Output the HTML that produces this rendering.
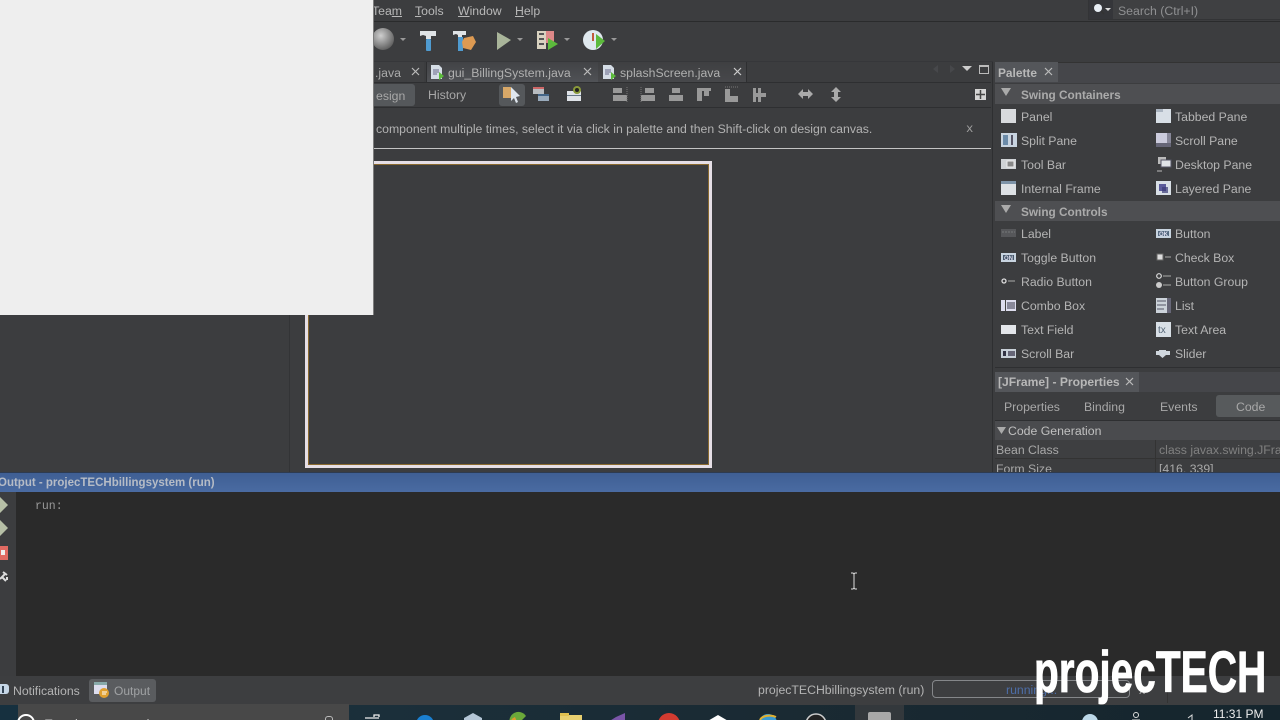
<!DOCTYPE html>
<html><head><meta charset="utf-8"><style>
html,body{margin:0;padding:0;width:1280px;height:720px;overflow:hidden;background:#3c3d3f}
#r{position:relative;width:1280px;height:720px;overflow:hidden;background:#3c3d3f;font:12.28px "Liberation Sans",sans-serif;color:#b4b4b4;filter:blur(.3px)}
.a{position:absolute}
.t{position:absolute;white-space:nowrap;line-height:14px}
.i{position:absolute;overflow:visible}
u{text-decoration:underline}
</style></head><body><div id="r">
<!-- lines -->
<div class="a" style="left:0;top:21px;width:1280px;height:1px;background:#2a2b2c"></div>
<div class="a" style="left:373px;top:61px;width:620px;height:1px;background:#36373a"></div>

<!-- menu -->
<div class="t" style="left:372px;top:4px;color:#b8b8b8">Tea<u>m</u></div>
<div class="t" style="left:415px;top:4px;color:#b8b8b8"><u>T</u>ools</div>
<div class="t" style="left:458px;top:4px;color:#b8b8b8"><u>W</u>indow</div>
<div class="t" style="left:515px;top:4px;color:#b8b8b8"><u>H</u>elp</div>

<!-- search -->
<div class="a" style="left:1088px;top:0;width:192px;height:19px;background:#3f4042;border:1px solid #333436;border-top:0;border-right:0"></div>
<div class="a" style="left:1089px;top:0;width:24px;height:19px;background:#35363a"></div>
<svg class="i" style="left:1092px;top:2px" width="20" height="14"><circle cx="6" cy="6" r="4" fill="#e8eef5"/><path d="M9 9l3 3" stroke="#333" stroke-width="1.5"/><path d="M13 6h6l-3 3z" fill="#ddd"/></svg>
<div class="t" style="left:1118px;top:4px;color:#8f9092">Search (Ctrl+I)</div>

<!-- toolbar icons -->
<svg class="i" style="left:372px;top:26px" width="250" height="28" viewBox="372 26 250 28">
<defs><radialGradient id="g" cx=".4" cy=".35" r=".7"><stop offset="0" stop-color="#cfcfcf"/><stop offset="1" stop-color="#5a5a5a"/></radialGradient></defs>
<circle cx="383" cy="39" r="11" fill="url(#g)"/>
<path d="M400 38h6l-3 3z" fill="#999"/>
<path d="M420 31h16v5h-5v3h-5v-3l-3-1-3 1z" fill="#dfe3e6"/><rect x="426" y="39" width="5" height="12" rx="1" fill="#4f9bd0"/>
<path d="M453 31h13v4h-4v2h-4v-2l-2-1-3 1z" fill="#dfe3e6"/><rect x="458" y="37" width="5" height="14" fill="#4f9bd0"/>
<path d="M464 38l9-2 3 6-5 8-8-2-1-6z" fill="#dd9a52"/>
<path d="M497 32l14 8-14 10z" fill="#a9b59a"/>
<path d="M517 38h6l-3 3z" fill="#999"/>
<rect x="537" y="31" width="9" height="18" fill="#d8d2c0"/><rect x="546" y="31" width="8" height="12" fill="#d88"/>
<path d="M539 34h5M539 39h5M539 44h5" stroke="#555" stroke-width="2"/>
<path d="M548 38l10 6-10 6z" fill="#5cba3c"/>
<path d="M564 38h6l-3 3z" fill="#999"/>
<circle cx="593" cy="40" r="10" fill="#dfe8ee"/><path d="M593 33v8" stroke="#c05a3a" stroke-width="2"/>
<path d="M596 34l9 7-9 8z" fill="#5cba3c"/>
<path d="M611 38h6l-3 3z" fill="#999"/>
</svg>

<!-- tab bar -->
<div class="a" style="left:373px;top:62px;width:51px;height:20px;background:#3f4042"></div>
<div class="t" style="left:375px;top:66px;color:#aaa">.java</div>
<svg class="i" style="left:411px;top:67px" width="10" height="10"><path d="M1 1l7 7M8 1l-7 7" stroke="#bbb" stroke-width="1.2"/></svg>
<div class="a" style="left:426px;top:62px;width:171px;height:20px;background:linear-gradient(#424346,#505256);border-left:1px solid #2e2f31;border-right:1px solid #2e2f31"></div>
<svg class="i" style="left:430px;top:65px" width="16" height="15"><path d="M1 0h8l3 3v11H1z" fill="#d5dde6"/><path d="M3 5h6M3 7h6M3 9h4" stroke="#668" /><path d="M9 7l5 4-5 4z" fill="#5cba3c"/></svg>
<div class="t" style="left:448px;top:66px;color:#b0b0b0">gui_BillingSystem.java</div>
<svg class="i" style="left:583px;top:67px" width="10" height="10"><path d="M1 1l7 7M8 1l-7 7" stroke="#bbb" stroke-width="1.2"/></svg>
<div class="a" style="left:598px;top:62px;width:148px;height:20px;background:linear-gradient(#3f4042,#47484b);border-right:1px solid #2e2f31"></div>
<svg class="i" style="left:602px;top:65px" width="16" height="15"><path d="M1 0h8l3 3v11H1z" fill="#d5dde6"/><path d="M3 5h6M3 7h6M3 9h4" stroke="#668" /><path d="M9 7l5 4-5 4z" fill="#5cba3c"/></svg>
<div class="t" style="left:620px;top:66px;color:#b0b0b0">splashScreen.java</div>
<svg class="i" style="left:733px;top:67px" width="10" height="10"><path d="M1 1l7 7M8 1l-7 7" stroke="#ccc" stroke-width="1.2"/></svg>
<div class="a" style="left:373px;top:82px;width:618px;height:1px;background:#2e2f31"></div>
<svg class="i" style="left:930px;top:62px" width="60" height="16"><path d="M8 3l-5 4 5 4zM20 3l5 4-5 4z" fill="#47484b"/><path d="M32 4h10l-5 5z" fill="#ccc"/><rect x="49.500" y="3.500" width="9" height="8" fill="none" stroke="#bbb"/><path d="M49 4h10" stroke="#bbb" stroke-width="2"/></svg>

<!-- design toolbar -->
<div class="a" style="left:373px;top:84px;width:42px;height:22px;background:#55585b;border-radius:0 3px 3px 0"></div>
<div class="t" style="left:376px;top:89px;color:#a8a8a8">esign</div>
<div class="t" style="left:428px;top:88px;color:#a8a8a8">History</div>
<div class="a" style="left:499px;top:84px;width:26px;height:22px;background:#55585b;border-radius:3px"></div>
<svg class="i" style="left:503px;top:86px" width="22" height="18"><rect x="0" y="1" width="8" height="11" fill="#d8a868"/><path d="M8 1l9 9-4 1 2 5-2 1-2-5-3 3z" fill="#dfe6ee"/></svg>
<svg class="i" style="left:532px;top:86px" width="18" height="16"><rect x="1" y="1" width="11" height="7" fill="#b8bcc0"/><rect x="1" y="1" width="11" height="2" fill="#c66"/><rect x="6" y="8" width="11" height="7" fill="#9ab"/><rect x="6" y="8" width="11" height="2" fill="#468"/></svg>
<svg class="i" style="left:566px;top:86px" width="18" height="16"><rect x="1" y="5" width="14" height="10" fill="#dfe3e8"/><rect x="1" y="9" width="14" height="1" fill="#678"/><circle cx="11" cy="4" r="4" fill="#8a9a3a"/><circle cx="11" cy="4" r="2" fill="#222"/></svg>
<svg class="i" style="left:612px;top:86px" width="160" height="18" fill="#999">
<path d="M1 2h9v5H1zM1 9h14v6H1z"/><path d="M15 1v16M1 16" stroke="#777" stroke-dasharray="1 1" fill="none"/>
<path d="M33 2h9v5h-9zM29 9h14v6H29z"/><path d="M29 1v16" stroke="#777" stroke-dasharray="1 1" fill="none"/>
<path d="M60 2h8v5h-8zM57 9h14v6H57z"/>
<path d="M85 2h14v3H85zM85 5h5v10h-5zM92 5h5v5h-5z"/>
<path d="M113 3h5v13h-5zM118 10h8v6h-8z"/><path d="M113 1h13" stroke="#777" stroke-dasharray="1 1" fill="none"/>
<path d="M141 2h3v14h-3zM146 2h3v14h-3zM144 7h10v4h-10z"/>
</svg>
<svg class="i" style="left:797px;top:87px" width="48" height="15" fill="#aaa"><path d="M1 7l5-5v3h5V2l5 5-5 5V9H6v3z"/><path d="M39 0l5 5h-3v5h3l-5 5-5-5h3V5h-3z"/></svg>
<svg class="i" style="left:975px;top:89px" width="11" height="11"><rect width="11" height="11" fill="#d5d5d5"/><path d="M5.500 1v9M1 5.500h9" stroke="#444" stroke-width="1.500"/></svg>
<div class="a" style="left:373px;top:107px;width:618px;height:1px;background:#2e2f31"></div>

<!-- hint -->
<div class="t" style="left:376px;top:122px;color:#b2b2b2">component multiple times, select it via click in palette and then Shift-click on design canvas.</div>
<div class="t" style="left:966px;top:122px;color:#a0a0a0;font-family:'Liberation Mono',monospace">x</div>
<div class="a" style="left:373px;top:148px;width:618px;height:1px;background:#c4c4c4"></div>

<!-- design canvas -->
<div class="a" style="left:305px;top:161px;width:401px;height:301px;border:3px solid #e6dfe6;box-shadow:inset 0 0 0 1px #8a6a30"></div>
<div class="a" style="left:289px;top:0;width:1px;height:472px;background:#333436"></div>

<!-- splitter -->
<div class="a" style="left:992px;top:62px;width:1px;height:410px;background:#2e2f31"></div>

<!-- Palette -->
<div class="a" style="left:995px;top:62px;width:285px;height:20px;background:#45464a;border-top:1px solid #333"></div>
<div class="a" style="left:995px;top:62px;width:63px;height:20px;background:#54565a"></div>
<div class="t" style="left:998px;top:66px;color:#b8b8b8;font-weight:bold;font-size:11.9px">Palette</div>
<svg class="i" style="left:1044px;top:67px" width="10" height="10"><path d="M1 1l7 7M8 1l-7 7" stroke="#bbb" stroke-width="1.2"/></svg>
<div class="a" style="left:995px;top:84px;width:285px;height:20px;background:#4e4f52"></div>
<svg class="i" style="left:1001px;top:88px" width="11" height="9"><path d="M0 0h10l-5 8z" fill="#aaa"/></svg>
<div class="t" style="left:1021px;top:88px;color:#ababab;font-weight:bold;font-size:11.8px">Swing Containers</div>
<div class="a" style="left:995px;top:201px;width:285px;height:20px;background:#4e4f52"></div>
<svg class="i" style="left:1001px;top:205px" width="11" height="9"><path d="M0 0h10l-5 8z" fill="#aaa"/></svg>
<div class="t" style="left:1021px;top:205px;color:#ababab;font-weight:bold;font-size:11.8px">Swing Controls</div>

<div class="t" style="left:1021px;top:110px">Panel</div>
<div class="t" style="left:1021px;top:134px">Split Pane</div>
<div class="t" style="left:1021px;top:158px">Tool Bar</div>
<div class="t" style="left:1021px;top:182px">Internal Frame</div>
<div class="t" style="left:1175px;top:110px">Tabbed Pane</div>
<div class="t" style="left:1175px;top:134px">Scroll Pane</div>
<div class="t" style="left:1175px;top:158px">Desktop Pane</div>
<div class="t" style="left:1175px;top:182px">Layered Pane</div>
<div class="t" style="left:1021px;top:227px">Label</div>
<div class="t" style="left:1021px;top:251px">Toggle Button</div>
<div class="t" style="left:1021px;top:275px">Radio Button</div>
<div class="t" style="left:1021px;top:299px">Combo Box</div>
<div class="t" style="left:1021px;top:323px">Text Field</div>
<div class="t" style="left:1021px;top:347px">Scroll Bar</div>
<div class="t" style="left:1175px;top:227px">Button</div>
<div class="t" style="left:1175px;top:251px">Check Box</div>
<div class="t" style="left:1175px;top:275px">Button Group</div>
<div class="t" style="left:1175px;top:299px">List</div>
<div class="t" style="left:1175px;top:323px">Text Area</div>
<div class="t" style="left:1175px;top:347px">Slider</div>

<svg class="i" style="left:1000px;top:108px" width="280" height="256" viewBox="1000 108 280 256">
<rect x="1001" y="109" width="15" height="14" fill="#d8dadd"/>
<rect x="1156" y="109" width="15" height="14" fill="#d8dfe6"/><rect x="1156" y="109" width="7" height="3" fill="#aab4c0"/>
<rect x="1001" y="133" width="16" height="14" fill="#c8d4e0"/><rect x="1003" y="135" width="5" height="10" fill="#6a8aa8"/><rect x="1011" y="135" width="2" height="10" fill="#556"/>
<rect x="1156" y="133" width="15" height="14" fill="#ccd"/><rect x="1167" y="133" width="4" height="14" fill="#889"/><rect x="1156" y="143" width="15" height="4" fill="#667"/>
<rect x="1001" y="159" width="15" height="10" fill="#d0d3d6"/><rect x="1007" y="161" width="7" height="6" fill="#888" stroke="#eee"/>
<rect x="1158" y="157" width="8" height="7" fill="#bbb"/><rect x="1161" y="160" width="10" height="7" fill="#e0e4e8" stroke="#556"/><path d="M1157 171h5" stroke="#bbb"/>
<rect x="1001" y="181" width="15" height="14" fill="#dde1e5"/><rect x="1001" y="181" width="15" height="3" fill="#7d93a8"/>
<rect x="1156" y="181" width="15" height="14" fill="#d8dfe6"/><rect x="1159" y="184" width="7" height="7" fill="#5a5a9a"/><rect x="1162" y="187" width="6" height="6" fill="#3a3a78" opacity=".7"/>
<rect x="1001" y="229" width="15" height="8" fill="#56575a"/><path d="M1002 232h13" stroke="#77787a" stroke-dasharray="2 1"/>
<rect x="1156" y="229" width="15" height="9" fill="#c8d4e0"/><rect x="1158" y="231" width="11" height="5" fill="#556a80"/><text x="1159" y="236" font-size="6" font-weight="bold" fill="#dde" font-family="Liberation Sans">OK</text>
<rect x="1001" y="253" width="15" height="9" fill="#c8d4e0"/><rect x="1003" y="255" width="11" height="5" fill="#46586c"/><text x="1004" y="260" font-size="6" font-weight="bold" fill="#dde" font-family="Liberation Sans">ON</text>
<rect x="1157" y="254" width="6" height="6" fill="#ddd" stroke="#666"/><path d="M1165 257h6" stroke="#aaa"/>
<circle cx="1004" cy="281" r="2" fill="none" stroke="#ddd" stroke-width="1.3"/><path d="M1008 281h7" stroke="#aaa"/>
<circle cx="1159" cy="276" r="2.300" fill="none" stroke="#ddd" stroke-width="1.2"/><circle cx="1159" cy="285" r="3" fill="#ccc"/><path d="M1163 276h8M1163 285h8" stroke="#aaa"/>
<rect x="1001" y="300" width="15" height="11" fill="#dde"/><rect x="1005" y="300" width="1" height="11" fill="#444"/><rect x="1007" y="302" width="8" height="7" fill="#889"/>
<rect x="1156" y="298" width="15" height="15" fill="#ccd3da"/><path d="M1157 301h9M1157 305h9M1157 309h7" stroke="#556"/><rect x="1167" y="298" width="4" height="15" fill="#667"/>
<rect x="1001" y="325" width="15" height="9" fill="#e3e6ea"/>
<rect x="1156" y="322" width="15" height="15" fill="#d8dfe6"/><text x="1158" y="333" font-size="10" fill="#567" font-family="Liberation Sans">tx</text>
<rect x="1001" y="349" width="15" height="9" fill="#c8d0d8"/><rect x="1003" y="351" width="3" height="5" fill="#334"/><rect x="1008" y="351" width="7" height="5" fill="#667"/>
<path d="M1156 351h3v-1h7v1h4v4h-4l-3.500 3-3.500-3h-3z" fill="#cfd6dd"/>
</svg>

<!-- Properties -->
<div class="a" style="left:995px;top:367px;width:285px;height:1px;background:#2e2f31"></div>
<div class="a" style="left:995px;top:372px;width:285px;height:20px;background:#45464a"></div>
<div class="a" style="left:995px;top:372px;width:144px;height:20px;background:#54565a"></div>
<div class="t" style="left:998px;top:375px;color:#b8b8b8;font-weight:bold;font-size:12.1px">[JFrame] - Properties</div>
<svg class="i" style="left:1125px;top:377px" width="10" height="10"><path d="M1 1l7 7M8 1l-7 7" stroke="#bbb" stroke-width="1.2"/></svg>
<div class="t" style="left:1004px;top:400px;color:#a8a8a8">Properties</div>
<div class="t" style="left:1084px;top:400px;color:#a8a8a8">Binding</div>
<div class="t" style="left:1160px;top:400px;color:#a8a8a8">Events</div>
<div class="a" style="left:1216px;top:395px;width:64px;height:22px;background:#575a5c;border-radius:3px 0 0 3px"></div>
<div class="t" style="left:1236px;top:400px;color:#a8a8a8">Code</div>
<div class="a" style="left:995px;top:420px;width:285px;height:1px;background:#2e2f31"></div>
<div class="a" style="left:995px;top:421px;width:285px;height:19px;background:#4a4b4e"></div>
<svg class="i" style="left:997px;top:427px" width="10" height="8"><path d="M0 0h9l-4.500 7z" fill="#aaa"/></svg>
<div class="t" style="left:1008px;top:424px;color:#c0c0c0">Code Generation</div>
<div class="a" style="left:995px;top:440px;width:285px;height:18px;background:#3e3f41"></div>
<div class="a" style="left:995px;top:458px;width:285px;height:1px;background:#333"></div>
<div class="a" style="left:1155px;top:440px;width:1px;height:32px;background:#333"></div>
<div class="t" style="left:996px;top:443px;color:#a8a8a8">Bean Class</div>
<div class="t" style="left:1159px;top:443px;color:#808080;width:121px;overflow:hidden">class javax.swing.JFrame</div>
<div class="a" style="left:996px;top:461px;width:284px;height:11px;overflow:hidden"><div class="t" style="left:0;top:1px;color:#a8a8a8">Form Size</div><div class="t" style="left:163px;top:1px;color:#a8a8a8">[416, 339]</div></div>

<!-- Output -->
<div class="a" style="left:0;top:472px;width:1280px;height:20px;background:linear-gradient(#3f5f94,#4a6ba2);border-top:1px solid #2e3b50;box-sizing:border-box"></div>
<div class="t" style="left:-2px;top:476px;color:#b6bcc6;font-weight:bold;font-size:11.5px">Output - projecTECHbillingsystem (run)</div>
<div class="a" style="left:0;top:492px;width:1280px;height:184px;background:#2a2a2a"></div>
<div class="a" style="left:0;top:492px;width:16px;height:184px;background:#3c3d3f"></div>
<svg class="i" style="left:0;top:496px" width="16" height="92"><path d="M0 1l8 8-8 8zM0 24l8 8-8 8z" fill="#b6bfa6"/><rect x="0" y="50" width="8" height="14" fill="#e06a62"/><rect x="1" y="54" width="4" height="5" fill="#eee"/><path d="M0 83l5-5M3 76l4 3M2 81l4 4M7 84v-3" stroke="#ddd" stroke-width="2" fill="none"/></svg>
<div class="t" style="left:35px;top:500px;font-size:11.5px;font-family:'Liberation Mono',monospace;color:#9a9a9a">run:</div>
<svg class="i" style="left:850px;top:572px" width="9" height="18"><path d="M1 1h2l1 1 1-1h2M4 2v14M1 17h2l1-1 1 1h2" stroke="#ddd" fill="none"/></svg>

<!-- status bar -->
<div class="a" style="left:0;top:676px;width:1280px;height:29px;background:#3d3e40"></div>
<svg class="i" style="left:0;top:683px" width="10" height="14"><path d="M0 1h6a3 3 0 0 1 3 3v4a3 3 0 0 1-3 3H0z" fill="#c6d6e6"/><rect x="2" y="3" width="2" height="7" fill="#345"/></svg>
<div class="t" style="left:13px;top:684px;color:#b4b4b4">Notifications</div>
<div class="a" style="left:89px;top:679px;width:67px;height:23px;background:#5a5c5f;border-radius:3px"></div>
<svg class="i" style="left:94px;top:682px" width="16" height="16"><rect x="0" y="0" width="13" height="12" fill="#dde"/><rect y="0" width="13" height="3" fill="#8aa"/><circle cx="10" cy="11" r="5" fill="#e0a030"/><path d="M8 10h5M8 12h4" stroke="#fff"/></svg>
<div class="t" style="left:114px;top:684px;color:#a0a2a4;font-size:12px">Output</div>
<div class="t" style="left:758px;top:683px;color:#b4b4b4">projecTECHbillingsystem (run)</div>
<div class="a" style="left:932px;top:680px;width:196px;height:16px;border:1px solid #85878a;border-radius:4px"></div>
<div class="t" style="left:1006px;top:683px;color:#4d6ea8">running...</div>
<div class="t" style="left:1139px;top:683px;color:#aaa">x</div>
<div class="a" style="left:1167px;top:677px;width:1px;height:26px;background:#333"></div>

<!-- taskbar -->
<div class="a" style="left:0;top:705px;width:1280px;height:15px;background:linear-gradient(90deg,#16303f,#1b2f3a 30%,#1a2a33 60%,#15252d)"></div>
<div class="a" style="left:18px;top:704px;width:331px;height:16px;background:#484848"></div>
<svg class="i" style="left:15px;top:712px" width="24" height="10"><circle cx="11" cy="11" r="8" fill="none" stroke="#fff" stroke-width="2"/></svg>
<div class="t" style="left:45px;top:717px;color:#ccc">Type here to search</div>
<div class="a" style="left:325px;top:716px;width:6px;height:6px;border:1px solid #bbb;border-radius:3px"></div>
<svg class="i" style="left:360px;top:708px" width="530" height="12" viewBox="360 708 530 12">
<path d="M365 718h14M374 717v-2h5v2" stroke="#eee" stroke-width="1.300" fill="none"/>
<circle cx="425" cy="724" r="9" fill="#1a7fd0"/>
<path d="M464 718l9-5 9 5v4h-18z" fill="#b4c6d6"/>
<path d="M510 724a9 9 0 0 1 16-8l-8 8z" fill="#6aa83a"/><path d="M510 724a8 8 0 0 1 5-7l3 7z" fill="#e09a30"/>
<rect x="560" y="715" width="22" height="7" fill="#e8d070"/><rect x="560" y="713" width="9" height="3" fill="#e0c050"/>
<path d="M608 722l8-5 9-4v9z" fill="#7a55a8"/>
<circle cx="669" cy="724" r="11" fill="#d23b30"/>
<path d="M706 722l12-7 12 7z" fill="#fff"/>
<circle cx="768" cy="723" r="9" fill="#3a9ad0"/><path d="M760 720a10 6 0 0 1 16-3" stroke="#e0b030" stroke-width="2" fill="none"/>
<circle cx="816" cy="724" r="10" fill="#222" stroke="#ccc" stroke-width="1.500"/>
</svg>
<div class="a" style="left:855px;top:705px;width:49px;height:15px;background:#33383c"></div>
<div class="a" style="left:868px;top:712px;width:23px;height:10px;background:#a8a8a8;border-radius:2px"></div>
<svg class="i" style="left:1075px;top:710px" width="130" height="10"><circle cx="15" cy="12" r="8" fill="#bcd8e8"/><circle cx="61" cy="5" r="2.500" fill="none" stroke="#ddd"/><path d="M57 10h8" stroke="#ddd"/><path d="M113 8l4-3v5" stroke="#ddd" fill="none"/></svg>
<div class="t" style="left:1213px;top:707px;color:#eee;font-size:12px">11:31 PM</div>

<!-- watermark -->
<div class="t" style="left:1034px;top:644px;color:#fff;font-family:'Liberation Sans',sans-serif;font-weight:bold;font-size:58px;line-height:58px;-webkit-text-stroke:.8px #fff;transform-origin:0 0;transform:scaleX(.7)">projecTECH</div>

<!-- white window -->
<div class="a" style="left:0;top:0;width:373px;height:315px;background:#eeeeee"></div>
<div class="a" style="left:373px;top:0;width:1px;height:315px;background:#7d7d7d"></div>
</div></body></html>
